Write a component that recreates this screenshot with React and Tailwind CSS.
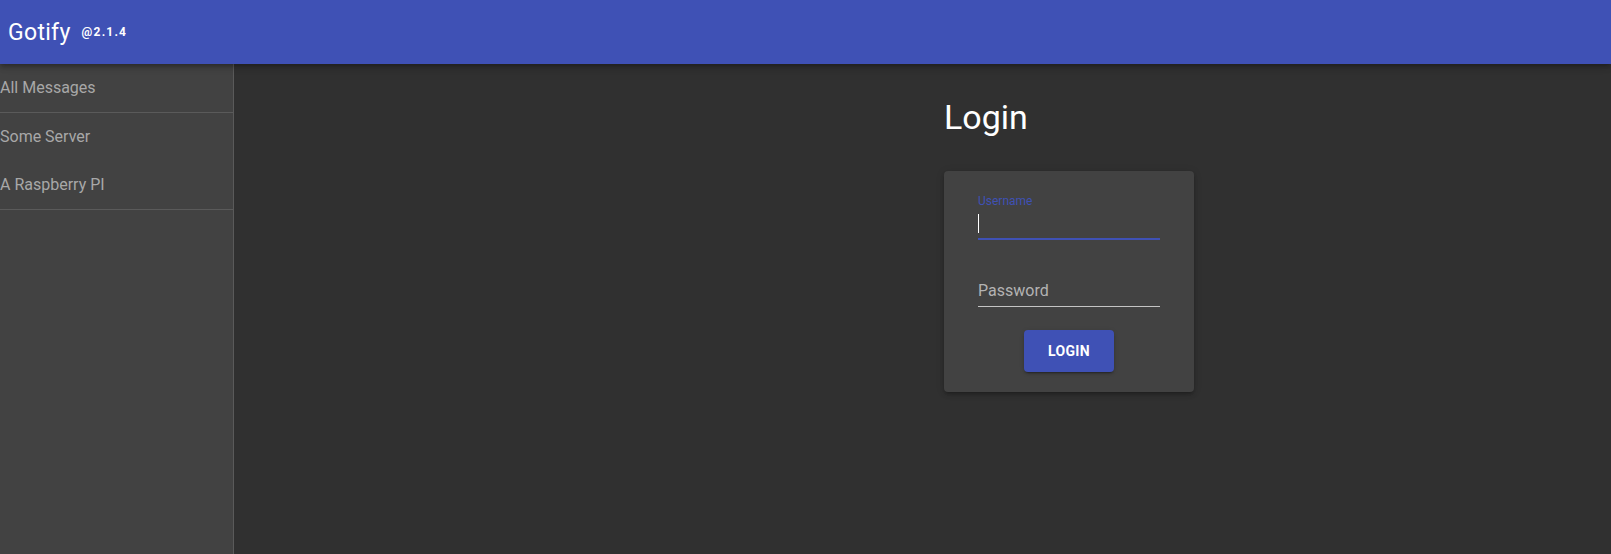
import React from 'react';

const font = { fontFamily: 'Roboto, "Noto Sans", sans-serif' };

const apps = ['Some Server', 'A Raspberry PI'];

const Header = () => (
    <header className="relative z-10 h-[64px] bg-[#3f51b5] shadow-[0_2px_4px_-1px_rgba(0,0,0,0.2),0_4px_5px_0_rgba(0,0,0,0.14),0_1px_10px_0_rgba(0,0,0,0.12)] flex items-center pl-[8px]">
        <span className="text-[23px] leading-[27px] tracking-[0.3px] text-white">Gotify</span>
        <span className="ml-[11px] text-[12px] font-bold leading-[14px] tracking-[1.2px] text-white">@2.1.4</span>
    </header>
);

const Sidebar = () => (
    <aside className="w-[234px] shrink-0 bg-[#424242] border-r border-[#5a5a5a]">
        <div className="h-[48px] flex items-center text-[16px] text-[#a8a8a8]">All Messages</div>
        <div className="h-px bg-[#5a5a5a]" />
        {apps.map((name) => (
            <div key={name} className="h-[48px] flex items-center text-[16px] text-[#a8a8a8]">
                {name}
            </div>
        ))}
        <div className="h-px bg-[#5a5a5a]" />
    </aside>
);

const LoginCard = () => (
    <div className="w-[250px] rounded bg-[#424242] pt-[24px] pb-[20px] px-[34px] shadow-[0_3px_3px_-2px_rgba(0,0,0,0.2),0_3px_4px_0_rgba(0,0,0,0.14),0_1px_8px_0_rgba(0,0,0,0.12)]">
        <div className="text-[12px] leading-[12px] text-[#3f51b5]">Username</div>
        <div className="pt-[7px] pb-[5px] border-b-2 border-[#3f51b5]">
            <div className="h-[19px] flex items-stretch">
                <span className="w-px bg-white" />
            </div>
        </div>
        <div className="mt-[41px] pb-[6px] border-b border-[#c4c4c4]">
            <div className="h-[19px] leading-[19px] text-[16px] text-[#b3b3b3]">Password</div>
        </div>
        <div className="mt-[23px] flex justify-center">
            <button className="w-[90px] h-[42px] rounded bg-[#3f51b5] text-white text-[14px] font-bold tracking-[0.3px] shadow-[0_3px_1px_-2px_rgba(0,0,0,0.2),0_2px_2px_0_rgba(0,0,0,0.14),0_1px_5px_0_rgba(0,0,0,0.12)]">
                LOGIN
            </button>
        </div>
    </div>
);

export default function App() {
    return (
        <div className="h-[554px] flex flex-col bg-[#303030] overflow-hidden" style={font}>
            <Header />
            <div className="flex flex-1 min-h-0">
                <Sidebar />
                <main className="flex-1 pt-[33px] pl-[710px]">
                    <h1 className="text-[34px] leading-[40px] font-normal text-white">Login</h1>
                    <div className="mt-[34px]">
                        <LoginCard />
                    </div>
                </main>
            </div>
        </div>
    );
}
